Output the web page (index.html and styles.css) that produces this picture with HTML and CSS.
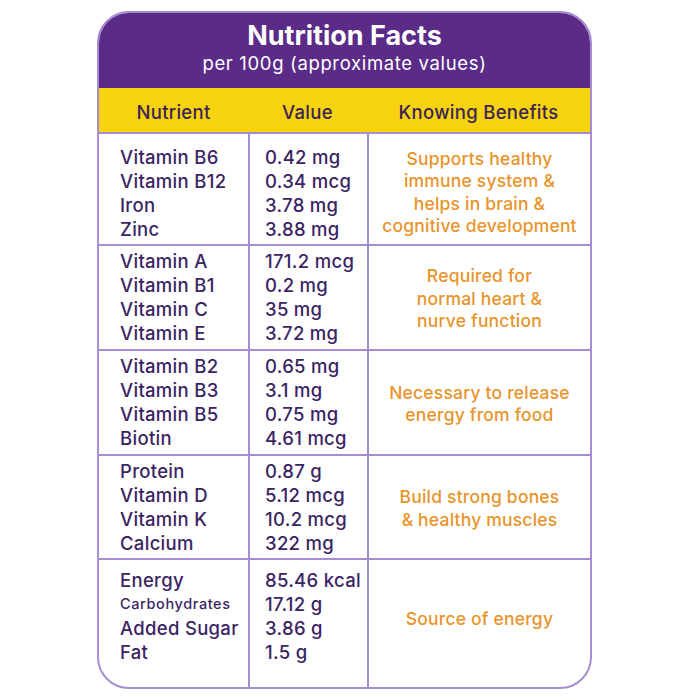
FILE: index.html
```html
<!DOCTYPE html>
<html>
<head>
<meta charset="utf-8">
<link rel="stylesheet" href="styles.css">
</head>
<body>
<div class="card">
  <div class="head">
    <div class="title">Nutrition Facts</div>
    <div class="sub">per 100g (approximate values)</div>
  </div>
  <div class="row thead">
    <div class="cell">Nutrient</div>
    <div class="cell">Value</div>
    <div class="cell">Knowing Benefits</div>
  </div>
  <div class="row first">
    <div class="cell names"><div>Vitamin B6</div><div>Vitamin B12</div><div>Iron</div><div>Zinc</div></div>
    <div class="cell vals"><div>0.42 mg</div><div>0.34 mcg</div><div>3.78 mg</div><div>3.88 mg</div></div>
    <div class="cell ben">Supports healthy<br>immune system &amp;<br>helps in brain &amp;<br>cognitive development</div>
  </div>
  <div class="row">
    <div class="cell names"><div>Vitamin A</div><div>Vitamin B1</div><div>Vitamin C</div><div>Vitamin E</div></div>
    <div class="cell vals"><div>171.2 mcg</div><div>0.2 mg</div><div>35 mg</div><div>3.72 mg</div></div>
    <div class="cell ben">Required for<br>normal heart &amp;<br>nurve function</div>
  </div>
  <div class="row">
    <div class="cell names"><div>Vitamin B2</div><div>Vitamin B3</div><div>Vitamin B5</div><div>Biotin</div></div>
    <div class="cell vals"><div>0.65 mg</div><div>3.1 mg</div><div>0.75 mg</div><div>4.61 mcg</div></div>
    <div class="cell ben">Necessary to release<br>energy from food</div>
  </div>
  <div class="row fourth">
    <div class="cell names"><div>Protein</div><div>Vitamin D</div><div>Vitamin K</div><div>Calcium</div></div>
    <div class="cell vals"><div>0.87 g</div><div>5.12 mcg</div><div>10.2 mcg</div><div>322 mg</div></div>
    <div class="cell ben">Build strong bones<br>&amp; healthy muscles</div>
  </div>
  <div class="row last">
    <div class="cell names"><div>Energy</div><div class="small">Carbohydrates</div><div>Added Sugar</div><div>Fat</div></div>
    <div class="cell vals"><div>85.46 kcal</div><div>17.12 g</div><div>3.86 g</div><div>1.5 g</div></div>
    <div class="cell ben">Source of energy</div>
  </div>
</div>
</body>
</html>
```
FILE: styles.css
```css
html, body {
  margin: 0;
  padding: 0;
  background: #ffffff;
}
body {
  font-family: Inter, "Open Sans", sans-serif;
  color: #3b2463;
}
.card {
  width: 495px;
  margin: 11px 0 0 97px;
  border: 2px solid #a68dd2;
  border-radius: 32px;
  overflow: hidden;
  box-sizing: border-box;
}
.head {
  background: #5b2b88;
  color: #ffffff;
  text-align: center;
  height: 75px;
  box-sizing: border-box;
  padding-top: 7px;
}
.title {
  font-size: 27px;
  font-weight: 700;
  line-height: 32px;
}
.sub {
  font-size: 18.5px;
  line-height: 22px;
  letter-spacing: 0.65px;
}
.row {
  display: grid;
  grid-template-columns: 149px 119px 1fr;
  border-top: 2px solid #a68dd2;
}
.thead {
  background: #f6d30c;
  border-top: none;
  height: 44px;
  padding-top: 3px;
  box-sizing: border-box;
  align-items: center;
  text-align: center;
  font-size: 18.5px;
  font-weight: 500;
  color: #3b2456;
}
.thead .cell {
  border-left: none;
}
.cell {
  border-left: 2px solid #a68dd2;
  font-size: 18.5px;
  line-height: 24px;
  letter-spacing: 0.3px;
}
.cell:first-child {
  border-left: none;
}
.names {
  padding: 3px 0 4px 21px;
}
.vals {
  padding: 3px 0 4px 15px;
}
.names, .vals {
  font-weight: 500;
}
.ben {
  color: #e8942b;
  font-weight: 500;
  text-align: center;
  display: flex;
  align-items: center;
  justify-content: center;
  line-height: 22.5px;
  font-size: 17.5px;
  letter-spacing: 0.2px;
  padding-top: 3px;
}
.first .names, .first .vals {
  padding-top: 11px;
  padding-bottom: 3px;
}
.first .ben {
  padding-top: 7px;
}
.fourth .names, .fourth .vals {
  padding-bottom: 3px;
}
.last .names, .last .vals {
  padding-top: 8px;
  padding-bottom: 23px;
}
.last .ben {
  padding-top: 0;
  padding-bottom: 9px;
}
.small {
  font-size: 14.5px;
  letter-spacing: 0.6px;
}
```
